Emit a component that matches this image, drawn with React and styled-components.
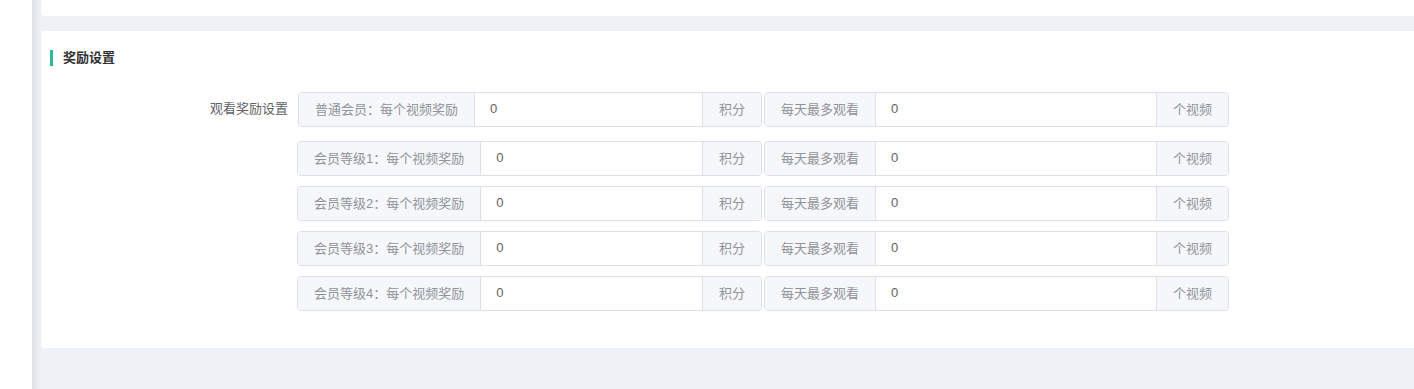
import React from "react";
import styled, { createGlobalStyle } from "styled-components";

const GlobalStyle = createGlobalStyle`
html, body {
  margin: 0;
  padding: 0;
  overflow: hidden;
  background: #ffffff;
  font-family: "Liberation Sans", "Noto Sans CJK SC", sans-serif;
}
`;

const levels = [
  { name: "会员等级1：每个视频奖励" },
  { name: "会员等级2：每个视频奖励" },
  { name: "会员等级3：每个视频奖励" },
  { name: "会员等级4：每个视频奖励" },
];

const RewardRow = ({ title, first }) => (
  <Row>
    <Group first={first}>
      <Addon>{title}</Addon>
      <Input type="text" defaultValue="0" />
      <Addon last>积分</Addon>
    </Group>
    <Group wide>
      <Addon>每天最多观看</Addon>
      <Input type="text" defaultValue="0" />
      <Addon last>个视频</Addon>
    </Group>
  </Row>
);

const App = () => {
  return (
    <Page>
      <GlobalStyle />
      <Sidebar />
      <Main>
        <TopCard />
        <Card>
          <Title>奖励设置</Title>
          <Form>
            <FormItem>
              <Label>观看奖励设置</Label>
              <RewardRow title="普通会员：每个视频奖励" first />
            </FormItem>
            <Levels>
              {levels.map((l) => (
                <RewardRow key={l.name} title={l.name} />
              ))}
            </Levels>
          </Form>
        </Card>
      </Main>
    </Page>
  );
};

const Page = styled.div`
display: flex;
width: 1414px;
height: 389px;
`;

const Sidebar = styled.div`
width: 32px;
flex-shrink: 0;
background: #ffffff;
`;

const Main = styled.div`
flex: 1;
padding-left: 9px;
background: linear-gradient(to right, #dde1e6 0px, #e8ebef 5px, #eef1f5 9px);
display: flex;
flex-direction: column;
`;

const TopCard = styled.div`
height: 16px;
background: #ffffff;
border-radius: 0 0 0 4px;
margin-bottom: 15px;
`;

const Card = styled.div`
height: 317px;
box-sizing: border-box;
background: #ffffff;
border-radius: 4px 0 0 4px;
padding: 19px 0 0 9px;
`;

const Title = styled.div`
height: 16px;
line-height: 16px;
border-left: 3px solid #2db993;
padding-left: 10px;
font-size: 13px;
font-weight: bold;
color: #303133;
`;

const Form = styled.div`
margin-top: 26px;
margin-left: -9px;
`;

const FormItem = styled.div`
display: flex;
margin-bottom: 14px;
`;

const Label = styled.div`
width: 247px;
padding-right: 10px;
box-sizing: content-box;
flex-shrink: 0;
text-align: right;
font-size: 13px;
line-height: 33px;
color: #606266;
`;

const Levels = styled.div`
display: flex;
flex-direction: column;
gap: 10px;
margin-left: 256px;
`;

const Row = styled.div`
display: flex;
gap: 2px;
`;

const Group = styled.div`
display: flex;
width: ${(p) => (p.wide ? "465px" : p.first ? "464px" : "465px")};
height: 35px;
box-sizing: border-box;
border: 1px solid #dcdfe6;
border-radius: 4px;
overflow: hidden;
`;

const Addon = styled.div`
flex-shrink: 0;
padding: 0 16px;
background: #f5f7fa;
color: #909399;
font-size: 13px;
line-height: 33px;
white-space: nowrap;
border-right: ${(p) => (p.last ? "none" : "1px solid #dcdfe6")};
border-left: ${(p) => (p.last ? "1px solid #dcdfe6" : "none")};
`;

const Input = styled.input`
flex: 1;
min-width: 0;
border: none;
outline: none;
padding: 0 15px 3px 15px;
font-family: "Liberation Sans", "Noto Sans CJK SC", sans-serif;
font-size: 13px;
color: #606266;
background: #ffffff;
`;

export default App;
